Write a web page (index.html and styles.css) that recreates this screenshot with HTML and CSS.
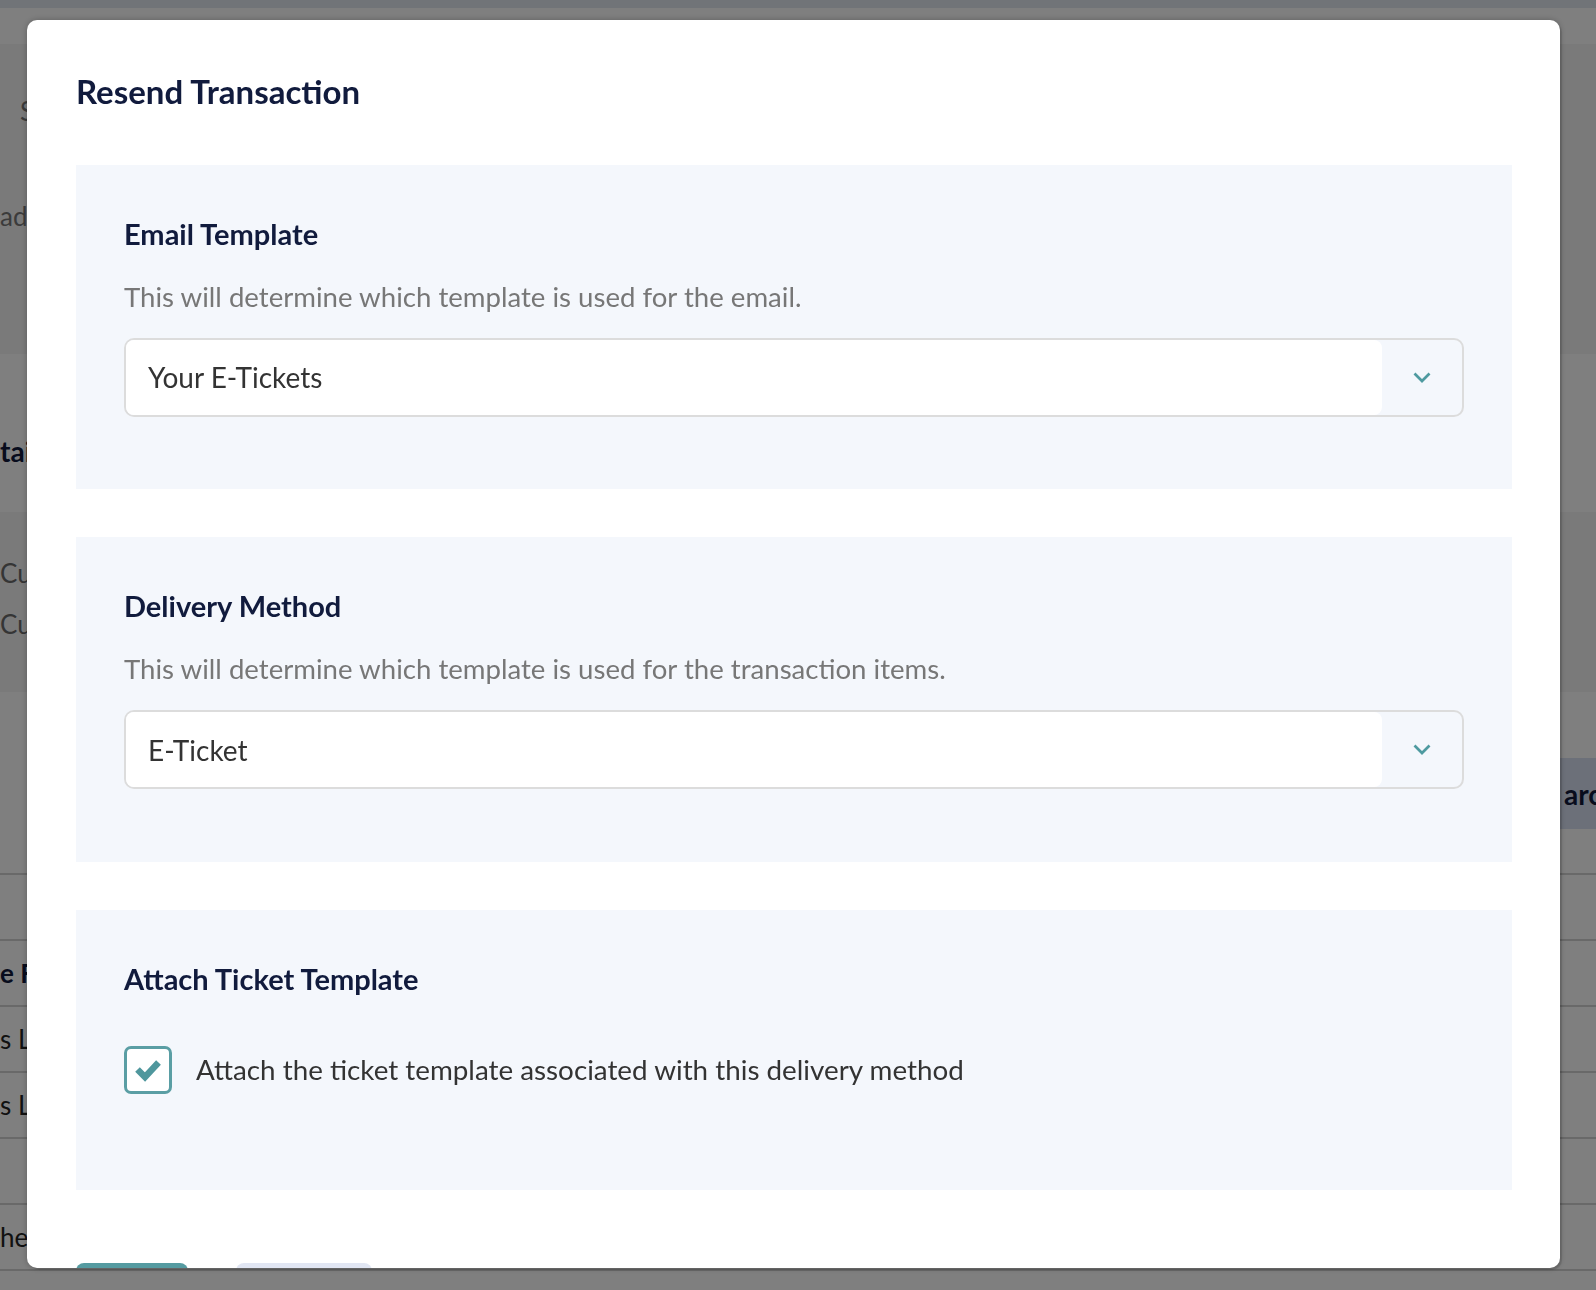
FILE: index.html
```html
<!DOCTYPE html>
<html lang="en">
<head>
<meta charset="utf-8">
<title>Resend Transaction</title>
<link rel="stylesheet" href="styles.css">
</head>
<body>
<div class="page">
  <div class="topstrip"></div>
  <header class="apphead"></header>
  <main class="bg-main">
    <div class="bg-block bg-a">
      <span class="bg-text bg-s">S</span>
      <span class="bg-text bg-ad">ad</span>
    </div>
    <div class="bg-block bg-card"><span class="bg-bold">tai</span></div>
    <div class="bg-block bg-b">
      <span class="bg-text-m">Cu</span>
      <span class="bg-text-m bg-cu2">Cu</span>
    </div>
    <div class="bg-block bg-c"><div class="bg-tab"><span class="bg-tab-text">arc</span></div></div>
    <div class="bg-row"></div>
    <div class="bg-row"><span class="bg-bold-sm">e F</span></div>
    <div class="bg-row"><span class="bg-text-d">s L</span></div>
    <div class="bg-row"><span class="bg-text-d">s L</span></div>
    <div class="bg-row"></div>
    <div class="bg-row"><span class="bg-text-d">he</span></div>
    <div class="bg-row"></div>
  </main>
</div>
<div class="backdrop"></div>
<div class="modal" role="dialog" aria-labelledby="modal-title">
  <h2 class="modal-title" id="modal-title">Resend Transaction</h2>

  <section class="panel">
    <h3 class="panel-title">Email Template</h3>
    <p class="panel-desc">This will determine which template is used for the email.</p>
    <div class="select">
      <div class="select-value">Your E-Tickets</div>
      <div class="select-addon">
        <svg class="chevron" width="18" height="11" viewBox="0 0 18 11"><polyline points="1.5,1.5 9,9 16.5,1.5" fill="none" stroke="#4e9aa0" stroke-width="2.7"/></svg>
      </div>
    </div>
  </section>

  <section class="panel">
    <h3 class="panel-title">Delivery Method</h3>
    <p class="panel-desc">This will determine which template is used for the transaction items.</p>
    <div class="select">
      <div class="select-value">E-Ticket</div>
      <div class="select-addon">
        <svg class="chevron" width="18" height="11" viewBox="0 0 18 11"><polyline points="1.5,1.5 9,9 16.5,1.5" fill="none" stroke="#4e9aa0" stroke-width="2.7"/></svg>
      </div>
    </div>
  </section>

  <section class="panel panel-check">
    <h3 class="panel-title">Attach Ticket Template</h3>
    <label class="check-row">
      <span class="checkbox">
        <svg width="42" height="42" viewBox="0 0 42 42"><polyline points="10.5,20.5 18,28 31.5,13.5" fill="none" stroke="#4f979d" stroke-width="6.5"/></svg>
      </span>
      <span class="check-label">Attach the ticket template associated with this delivery method</span>
    </label>
  </section>

  <div class="actions">
    <button class="btn btn-primary" aria-label="Send"></button>
    <button class="btn btn-secondary" aria-label="Cancel"></button>
  </div>
</div>
</body>
</html>
```

FILE: styles.css
```css
* { box-sizing: border-box; }
html, body { margin: 0; padding: 0; }
body {
  width: 1596px;
  height: 1290px;
  overflow: hidden;
  font-family: Lato, "Open Sans", sans-serif;
  background: #ffffff;
}

/* background page (dimmed by the backdrop) */
.page { width: 1596px; height: 1290px; background: #ffffff; }
.topstrip { height: 8px; background: #e3e8f1; }
.apphead { height: 36px; background: #ffffff; }
.bg-main { display: flex; flex-direction: column; }
.bg-block {
  display: flex;
  flex-direction: column;
  align-items: flex-start;
  white-space: nowrap;
}
.bg-a { height: 310px; background: #f4f4f5; padding-top: 52px; }
.bg-s { padding-left: 20px; }
.bg-ad { margin-top: 74px; }
.bg-card { height: 158px; background: #ffffff; padding-top: 80px; }
.bg-b { height: 180px; background: #f4f4f5; padding-top: 46px; }
.bg-cu2 { margin-top: 20px; }
.bg-c { height: 181px; background: #ffffff; padding-top: 66px; align-items: flex-end; }
.bg-tab {
  width: 100px;
  height: 71px;
  background: #d8e0f2;
  display: flex;
  align-items: center;
  padding-left: 68px;
  overflow: hidden;
}
.bg-tab-text {
  color: #10193a;
  font-weight: 700;
  font-size: 28px;
}
.bg-row {
  height: 66px;
  border-top: 2px solid #d2d2d2;
  display: flex;
  align-items: center;
  white-space: nowrap;
  background: #ffffff;
}
.bg-text { font-size: 26px; line-height: 31px; color: #777; }
.bg-text-m { font-size: 26px; line-height: 31px; color: #6a6a6a; }
.bg-text-d { color: #222; font-size: 26px; }
.bg-bold { color: #10193a; font-weight: 700; font-size: 28px; line-height: 34px; }
.bg-bold-sm { color: #10193a; font-weight: 700; font-size: 26px; }

.backdrop {
  position: fixed;
  inset: 0;
  background: rgba(0, 0, 0, 0.5);
}

/* modal */
.modal {
  position: fixed;
  left: 27px;
  top: 20px;
  width: 1533px;
  height: 1248px;
  background: #ffffff;
  border-radius: 10px;
  overflow: hidden;
  padding: 52px 48px 0 49px;
  box-shadow: 2px 2px 1px rgba(0,0,0,0.12), 0 0 6px rgba(0,0,0,0.25);
}
.modal-title {
  margin: 0;
  font-size: 33px;
  line-height: 1.2;
  font-weight: 700;
  color: #111b3d;
}

.panel {
  background: #f4f7fc;
  padding: 52px 48px 72.5px;
  margin-top: 53px;
}
.panel + .panel { margin-top: 48px; }
.panel-title {
  margin: 0;
  font-size: 29px;
  line-height: 1.2;
  font-weight: 700;
  color: #111b3d;
}
.panel-desc {
  margin: 28.5px 0 0;
  font-size: 27.6px;
  line-height: 1.2;
  color: #777777;
}

.select {
  margin-top: 24.6px;
  height: 79px;
  border: 2px solid #dcdcdc;
  border-radius: 10px;
  display: flex;
}
.select-value {
  flex: 1;
  background: #ffffff;
  border-radius: 8px;
  display: flex;
  align-items: center;
  padding-left: 22px;
  font-size: 28px;
  color: #333333;
}
.select-addon {
  width: 80px;
  display: flex;
  align-items: center;
  justify-content: center;
}

.panel-check { padding-bottom: 96.5px; }
.check-row {
  margin-top: 49.5px;
  display: flex;
  align-items: center;
  gap: 24px;
}
.checkbox {
  width: 48px;
  height: 48px;
  border: 3px solid #5a9ea4;
  border-radius: 7px;
  background: #ffffff;
  display: flex;
  align-items: center;
  justify-content: center;
}
.check-label {
  font-size: 27.8px;
  color: #333333;
}

.actions {
  margin-top: 73px;
  display: flex;
  gap: 48px;
}
.btn {
  height: 60px;
  border: none;
  border-radius: 8px;
  font-family: inherit;
  font-size: 26px;
  font-weight: 700;
}
.btn-primary { width: 112px; background: #559ba1; color: #fff; }
.btn-secondary { width: 136px; background: #e1e6f3; color: #111b3d; }
```
